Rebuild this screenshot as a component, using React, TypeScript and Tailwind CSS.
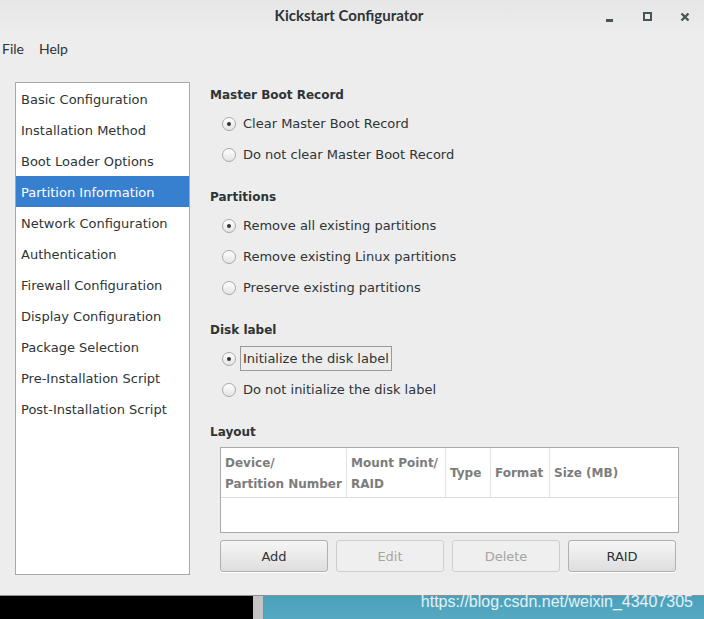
import React from 'react';

const sections = [
  'Basic Configuration',
  'Installation Method',
  'Boot Loader Options',
  'Partition Information',
  'Network Configuration',
  'Authentication',
  'Firewall Configuration',
  'Display Configuration',
  'Package Selection',
  'Pre-Installation Script',
  'Post-Installation Script',
];

const body = { fontFamily: '"DejaVu Sans", sans-serif' };
const ui = { fontFamily: 'Lato, "Open Sans", sans-serif' };

function Radio({ label, checked, focused }: { label: string; checked?: boolean; focused?: boolean }) {
  return (
    <div className="h-[31px] flex items-center pl-[12px] gap-[4px]">
      <span className="w-[14px] h-[14px] rounded-full border border-[#a8a8a8] bg-gradient-to-b from-[#ffffff] to-[#e4e4e4] flex items-center justify-center shadow-[inset_0_1px_0_#fff]">
        {checked && <span className="w-[4px] h-[4px] rounded-full bg-[#2e3436]" />}
      </span>
      <span
        className={`px-[2px] h-[25px] pt-[1px] flex items-center border ${
          focused ? 'border-[#9a9a9a]' : 'border-transparent'
        }`}
      >
        {label}
      </span>
    </div>
  );
}

function Header({ children }: { children: React.ReactNode }) {
  return <div className="h-[24px] pt-[1px] flex items-center font-bold text-[12px]">{children}</div>;
}

function Btn({ label, disabled }: { label: string; disabled?: boolean }) {
  return (
    <button
      className={`w-[108px] h-[32px] rounded-[3px] border text-[13px] pt-[2px] ${
        disabled
          ? 'border-[#cdcdcd] bg-[#efefef] text-[#a4a4a4]'
          : 'border-[#b0b0b0] bg-gradient-to-b from-[#f6f6f6] to-[#dedede] text-[#2e3436] shadow-[0_1px_0_#fff]'
      }`}
      style={body}
    >
      {label}
    </button>
  );
}

export default function App() {
  return (
    <div className="w-[704px] h-[619px] flex flex-col bg-[#ededed] text-[#2e3436] overflow-hidden">
      <div className="h-[33px] shrink-0 relative flex items-center justify-center bg-gradient-to-b from-[#e6e6e6] to-[#ededed]">
        <span className="font-bold text-[15px] text-[#2e3436] mb-[2px] mr-[6px]" style={ui}>
          Kickstart Configurator
        </span>
        <div className="absolute right-0 top-0 h-full flex items-center">
          <span className="w-[38px] flex justify-center">
            <span className="w-[7px] h-[3px] bg-[#4a5457] mt-[7px]" />
          </span>
          <span className="w-[38px] flex justify-center">
            <span className="w-[9px] h-[9px] border-[2px] border-[#4a5457]" />
          </span>
          <span className="w-[38px] flex justify-center">
            <svg width="10" height="10" viewBox="0 0 10 10">
              <path d="M1.5 1.5 L8.5 8.5 M8.5 1.5 L1.5 8.5" stroke="#4a5457" strokeWidth="2.4" />
            </svg>
          </span>
        </div>
      </div>

      <div className="h-[33px] shrink-0 flex items-center gap-[15px] pl-[2px] pb-[2px] text-[14px]" style={ui}>
        <span>File</span>
        <span>Help</span>
      </div>

      <div className="flex-1 flex pl-[15px] pt-[16px] pb-[20px]" style={body}>
        <div className="w-[175px] border border-[#a9a9a9] bg-white text-[13px]">
          {sections.map((s) => (
            <div
              key={s}
              className={`h-[31px] flex items-center pl-[5px] pt-[2px] ${
                s === 'Partition Information' ? 'bg-[#3780cf] text-white' : ''
              }`}
            >
              {s}
            </div>
          ))}
        </div>

        <div className="flex-1 pl-[20px] text-[13px]">
          <Header>Master Boot Record</Header>
          <div className="mt-[2px]">
            <Radio label="Clear Master Boot Record" checked />
            <Radio label="Do not clear Master Boot Record" />
          </div>
          <div className="mt-[14px]">
            <Header>Partitions</Header>
          </div>
          <div className="mt-[2px]">
            <Radio label="Remove all existing partitions" checked />
            <Radio label="Remove existing Linux partitions" />
            <Radio label="Preserve existing partitions" />
          </div>
          <div className="mt-[14px]">
            <Header>Disk label</Header>
          </div>
          <div className="mt-[2px]">
            <Radio label="Initialize the disk label" checked focused />
            <Radio label="Do not initialize the disk label" />
          </div>
          <div className="mt-[14px]">
            <Header>Layout</Header>
          </div>
          <div className="ml-[10px] mt-[4px] w-[459px]">
            <div className="h-[86px] border border-[#a9a9a9] bg-white flex flex-col">
              <div className="h-[50px] flex border-b border-[#dcdcdc] font-bold text-[12px] text-[#7c7c7c] leading-[21px]">
                <div className="w-[126px] border-r border-[#e2e2e2] px-[4px] pt-[5px]">
                  Device/
                  <br />
                  Partition Number
                </div>
                <div className="w-[99px] border-r border-[#e2e2e2] px-[4px] pt-[5px]">
                  Mount Point/
                  <br />
                  RAID
                </div>
                <div className="w-[45px] border-r border-[#e2e2e2] px-[4px] flex items-center pt-[1px]">Type</div>
                <div className="w-[59px] border-r border-[#e2e2e2] px-[4px] flex items-center pt-[1px]">Format</div>
                <div className="flex-1 px-[4px] flex items-center pt-[1px]">Size (MB)</div>
              </div>
            </div>
            <div className="mt-[7px] flex gap-[8px]">
              <Btn label="Add" />
              <Btn label="Edit" disabled />
              <Btn label="Delete" disabled />
              <Btn label="RAID" />
            </div>
          </div>
        </div>
      </div>

      <div className="h-[24px] shrink-0 flex relative border-t border-[#8f8f8f]">
        <div className="w-[253px] bg-black" />
        <div className="w-[11px] bg-[#c4c4c4] border-r border-[#8a8a8a]" />
        <div className="flex-1 bg-gradient-to-b from-[#4aa0bb] to-[#56a9c2]" />
        <span
          className="absolute right-[11px] top-[-6px] text-[16px] text-white/85"
          style={{ fontFamily: '"Liberation Sans", Arial, sans-serif' }}
        >
          https://blog.csdn.net/weixin_43407305
        </span>
      </div>
    </div>
  );
}
